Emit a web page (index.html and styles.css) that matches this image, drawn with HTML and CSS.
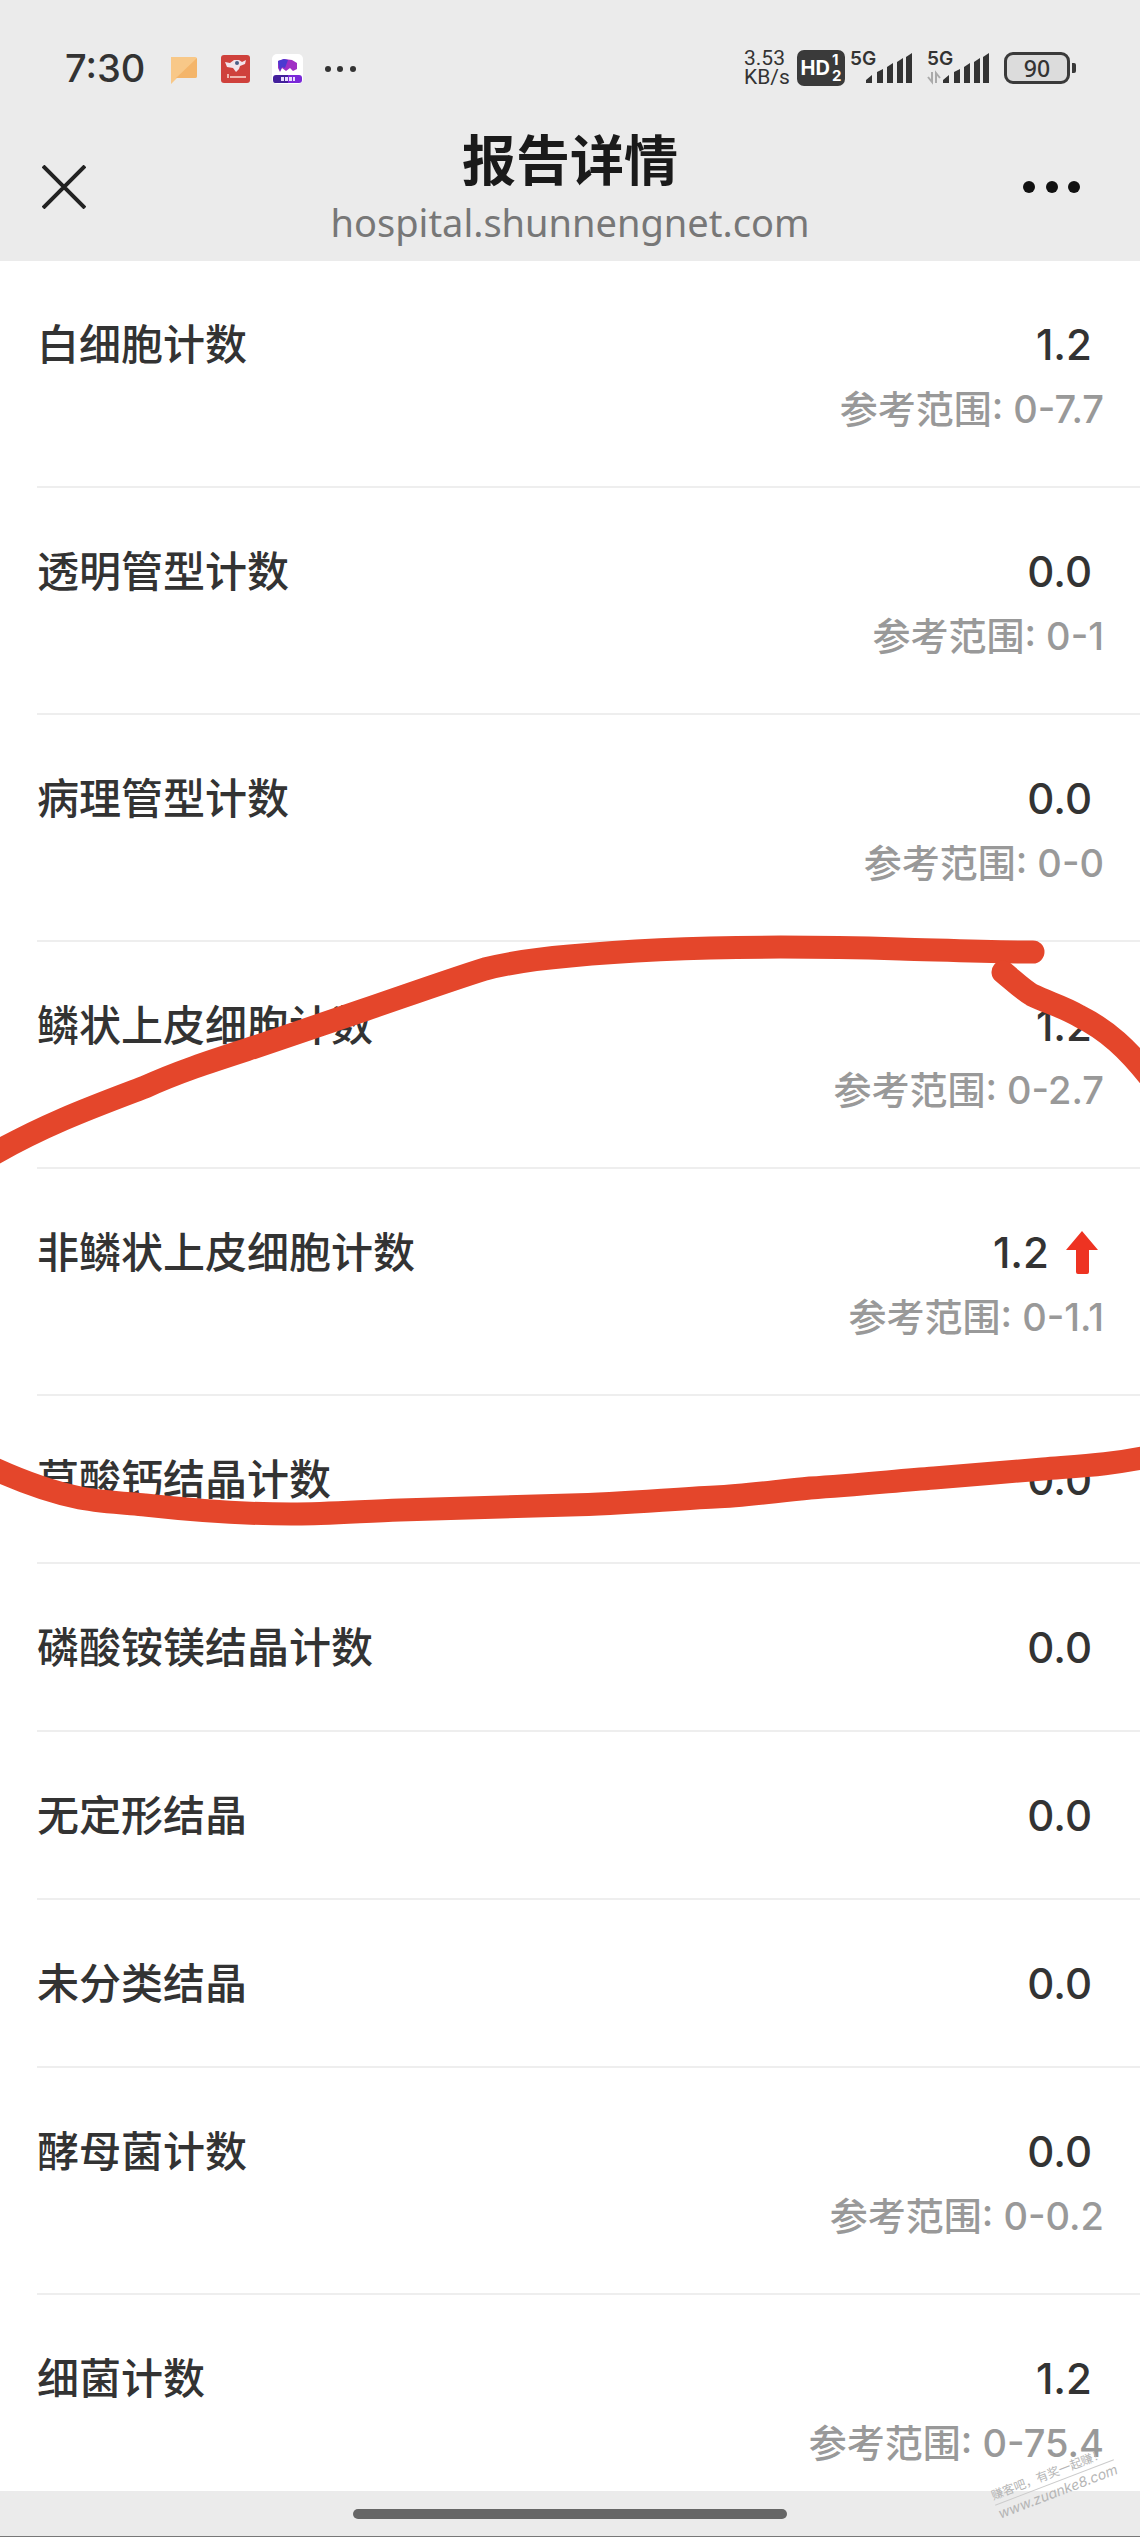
FILE: index.html
```
<!DOCTYPE html>
<html lang="zh-CN">
<head>
    <meta charset="UTF-8">
    <meta name="viewport" content="width=device-width, initial-scale=1.0">
    <title>报告详情</title>
    <link rel="stylesheet" href="styles.css">
</head>
<body>
    <!-- Phone status bar -->
    <div class="statusBar">
        <span class="clock">7:30</span>
        <svg class="notices" width="190" height="36" viewBox="0 0 190 36">
            <path d="M2 7h24q2 0 2 2v17q0 2-2 2H8l-6 6z" fill="#f8c888"/>
            <path d="M28 8v18q0 2-2 2H7z" fill="#f4b56a"/>
            <rect x="52" y="5" width="29" height="28" rx="3" fill="#cf413c"/>
            <path d="M56 12l5 1 4-3h5l3 2 4-2-1 4-5 2-1 3-3 3-3-4-6-1z" fill="#f2e4ea"/>
            <circle cx="68" cy="13" r="2" fill="#4a5f88"/>
            <path d="M59 24v4M61 27h16" stroke="#f0b5ae" stroke-width="2"/>
            <rect x="103" y="4" width="31" height="30" rx="5" fill="#fff"/>
            <path d="M109 11l6-2 8 1 5 3v6l-4 2-3-3-4 3-4-3-2 4-2-4z" fill="#a02fc4"/>
            <path d="M109 11l6-2 4 1-3 8-3-1-2 4-1-4z" fill="#4b3ad0"/>
            <path d="M107 25h12v8h-13q-2 0-2-3v-2q0-3 3-3z" fill="#43209c"/>
            <path d="M119 25h11q3 0 3 3v2q0 3-3 3h-11z" fill="#7a28d8"/>
            <path d="M112 29h14" stroke="#e9dcff" stroke-width="4" stroke-dasharray="3 1"/>
            <circle cx="159" cy="19" r="3" fill="#333"/>
            <circle cx="171" cy="19" r="3" fill="#333"/>
            <circle cx="184" cy="19" r="3" fill="#333"/>
        </svg>
        <div class="netSpeed"><span>3.53</span><span>KB/s</span></div>
        <div class="hdBadge"><span>HD</span><span class="simNumbers"><span>1</span><span>2</span></span></div>
        <div class="signal">
            <span>5G</span>
            <svg width="62" height="36" viewBox="0 0 62 36" fill="#333">
                <path d="M16 33v-3l6-5v8zM27 33V22l6-3v14zM37 33V17l6-4v20zM47 33V12l6-4v25zM56 33V7l6-4v30z"/>
            </svg>
        </div>
        <div class="signal">
            <span>5G</span>
            <svg width="62" height="36" viewBox="0 0 62 36" fill="#333">
                <path d="M1 27l4 5V22M9 33V23l4 5" fill="none" stroke="#aaa" stroke-width="2"/>
                <path d="M16 33v-3l6-5v8zM27 33V22l6-3v14zM37 33V17l6-4v20zM47 33V12l6-4v25zM56 33V7l6-4v30z"/>
            </svg>
        </div>
        <div class="battery">90</div>
    </div>

    <header class="titleBar">
        <button class="iconBtn" type="button" aria-label="关闭">
            <svg width="44" height="44" viewBox="0 0 44 44"><path d="M1 1l42 42M43 1L1 43" stroke="#222" stroke-width="4"/></svg>
        </button>
        <div class="pageTitle">
            <h1>报告详情</h1>
            <p>hospital.shunnengnet.com</p>
        </div>
        <button class="iconBtn moreBtn" type="button" aria-label="更多">
            <svg width="58" height="12" viewBox="0 0 58 12" fill="#111"><circle cx="6" cy="6" r="6"/><circle cx="29" cy="6" r="6"/><circle cx="51" cy="6" r="6"/></svg>
        </button>
    </header>

    <main class="report">
        <ul class="resultList">
            <li><span class="name">白细胞计数</span><span class="value">1.2</span><span class="range">参考范围: 0-7.7</span></li>
            <li><span class="name">透明管型计数</span><span class="value">0.0</span><span class="range">参考范围: 0-1</span></li>
            <li><span class="name">病理管型计数</span><span class="value">0.0</span><span class="range">参考范围: 0-0</span></li>
            <li><span class="name">鳞状上皮细胞计数</span><span class="value">1.2</span><span class="range">参考范围: 0-2.7</span></li>
            <li>
                <span class="name">非鳞状上皮细胞计数</span>
                <span class="value">1.2</span>
                <svg class="highArrow" width="43" height="44" viewBox="0 0 43 44"><path d="M21 0l16 19h-9v22q0 2-2 2h-9q-2 0-2-2V19H5z" fill="#ee3322"/></svg>
                <span class="range">参考范围: 0-1.1</span>
            </li>
            <li><span class="name">草酸钙结晶计数</span><span class="value">0.0</span></li>
            <li><span class="name">磷酸铵镁结晶计数</span><span class="value">0.0</span></li>
            <li><span class="name">无定形结晶</span><span class="value">0.0</span></li>
            <li><span class="name">未分类结晶</span><span class="value">0.0</span></li>
            <li><span class="name">酵母菌计数</span><span class="value">0.0</span><span class="range">参考范围: 0-0.2</span></li>
            <li><span class="name">细菌计数</span><span class="value">1.2</span><span class="range">参考范围: 0-75.4</span></li>
        </ul>
        <!-- Hand drawn marker circle -->
        <svg class="marker" viewBox="0 261 1140 2230">
            <path d="M1033 952C985 952 940 950 900 949C800 946 670 946 570 956C535 959 508 963 485 969C450 980 405 996 364 1010C325 1023 290 1035 255 1047C215 1060 180 1071 145 1087C95 1106 45 1124 -12 1157"/>
            <path d="M1003 972C1014 981 1022 989 1032 995C1049 1003 1064 1007 1079 1016C1107 1030 1128 1049 1152 1080"/>
            <path d="M-12 1466C20 1481 50 1492 80 1498C102 1502 122 1503 145 1505C190 1510 240 1514 291 1514C330 1514 365 1511 400 1510L570 1505C625 1504 670 1499 715 1497C745 1496 777 1491 810 1488C855 1485 895 1481 934 1478C970 1475 1007 1472 1043 1469C1080 1466 1110 1465 1152 1456"/>
        </svg>
    </main>

    <div class="homeBar"><span class="handle"></span></div>

    <div class="watermark"><span>赚客吧，有奖一起赚！</span><span class="site">www.zuanke8.com</span></div>
</body>
</html>
```
FILE: styles.css
```
* {
    box-sizing: border-box;
}
body {
    margin: 0;
    height: 100vh;
    display: flex;
    flex-direction: column;
    position: relative;
    overflow: hidden;
    background-color: #fff;
    color: #333;
    font-family: Inter, "Noto Sans CJK SC", sans-serif;
}

/* status bar */
.statusBar {
    display: flex;
    align-items: center;
    height: 100px;
    padding: 36px 64px 0 65px;
    background-color: #ebebeb;
}
.clock {
    width: 104px;
    font-size: 38px;
    font-weight: 500;
}
.notices {
    margin-right: auto;
}
.netSpeed {
    display: flex;
    flex-direction: column;
    width: 53px;
    font-family: Roboto, sans-serif;
    font-size: 21px;
    line-height: 19px;
}
.hdBadge {
    display: flex;
    align-items: center;
    justify-content: center;
    gap: 2px;
    width: 48px;
    height: 36px;
    margin-right: 5px;
    border-radius: 7px;
    background-color: #3a3a3a;
    color: #fff;
    font-size: 20px;
    font-weight: 700;
}
.simNumbers {
    display: flex;
    flex-direction: column;
    font-size: 15px;
    line-height: 16px;
}
.signal {
    position: relative;
    height: 36px;
    margin-right: 15px;
}
.signal span {
    position: absolute;
    left: 0;
    top: 0;
    font-size: 19px;
    font-weight: 600;
    line-height: 18px;
}
.battery {
    position: relative;
    width: 66px;
    height: 32px;
    margin-right: 6px;
    border: 3px solid #3a3a3a;
    border-radius: 9px;
    background-color: #dcdcdc;
    font-family: "Noto Sans", sans-serif;
    font-size: 23px;
    font-weight: 500;
    line-height: 26px;
    text-align: center;
}
.battery::after {
    content: "";
    position: absolute;
    right: -9px;
    top: 8px;
    width: 4px;
    height: 10px;
    border-radius: 0 2px 2px 0;
    background-color: #3a3a3a;
}

/* title */
.titleBar {
    display: grid;
    grid-template-columns: 1fr auto 1fr;
    height: 161px;
    padding: 24px 42px 0;
    background-color: #ebebeb;
}
.iconBtn {
    display: flex;
    align-items: center;
    width: 58px;
    height: 126px;
    padding: 0;
    border: none;
    background: none;
    cursor: pointer;
}
.moreBtn {
    justify-self: end;
    margin-right: 17px;
}
.pageTitle {
    text-align: center;
}
.pageTitle h1 {
    margin: 0;
    color: #1a1a1a;
    font-size: 54px;
    font-weight: 700;
    line-height: 76px;
}
.pageTitle p {
    margin: 0;
    color: #777;
    font-family: "Noto Sans", sans-serif;
    font-size: 38px;
    line-height: 44px;
}

/* results */
.report {
    position: relative;
    flex: 1;
    min-height: 0;
    overflow: hidden;
}
.resultList {
    margin: 0;
    padding: 0 0 0 37px;
    list-style: none;
}
.resultList li {
    display: flex;
    flex-wrap: wrap;
    align-items: center;
    padding: 54px 36px 52px 0;
    border-bottom: 2px solid #eee;
}
.name {
    flex: 1;
    font-size: 42px;
    font-weight: 500;
    line-height: 60px;
}
.value {
    margin-right: 12px;
    font-size: 42px;
    font-weight: 500;
    line-height: 60px;
}
.range {
    width: 100%;
    margin-top: 9px;
    color: #999;
    font-size: 38px;
    font-weight: 500;
    line-height: 50px;
    text-align: right;
}
.marker {
    position: absolute;
    top: 0;
    left: 0;
    width: 100%;
    fill: none;
    stroke: #e4462b;
    stroke-width: 23px;
    stroke-linecap: round;
    pointer-events: none;
}

/* bottom */
.homeBar {
    height: 46px;
    padding-top: 18px;
    border-bottom: 1px solid #777;
    background-color: #ebebeb;
}
.handle {
    display: block;
    width: 38%;
    height: 10px;
    margin: 0 auto;
    border-radius: 5px;
    background-color: #666;
}
.watermark {
    position: absolute;
    right: 22px;
    bottom: 36px;
    display: flex;
    flex-direction: column;
    color: #b5b5b5;
    font-size: 12px;
    line-height: 18px;
    transform: rotate(-21deg);
}
.site {
    border-top: 1px solid #ccc;
    font-size: 14px;
    font-style: italic;
}
```
